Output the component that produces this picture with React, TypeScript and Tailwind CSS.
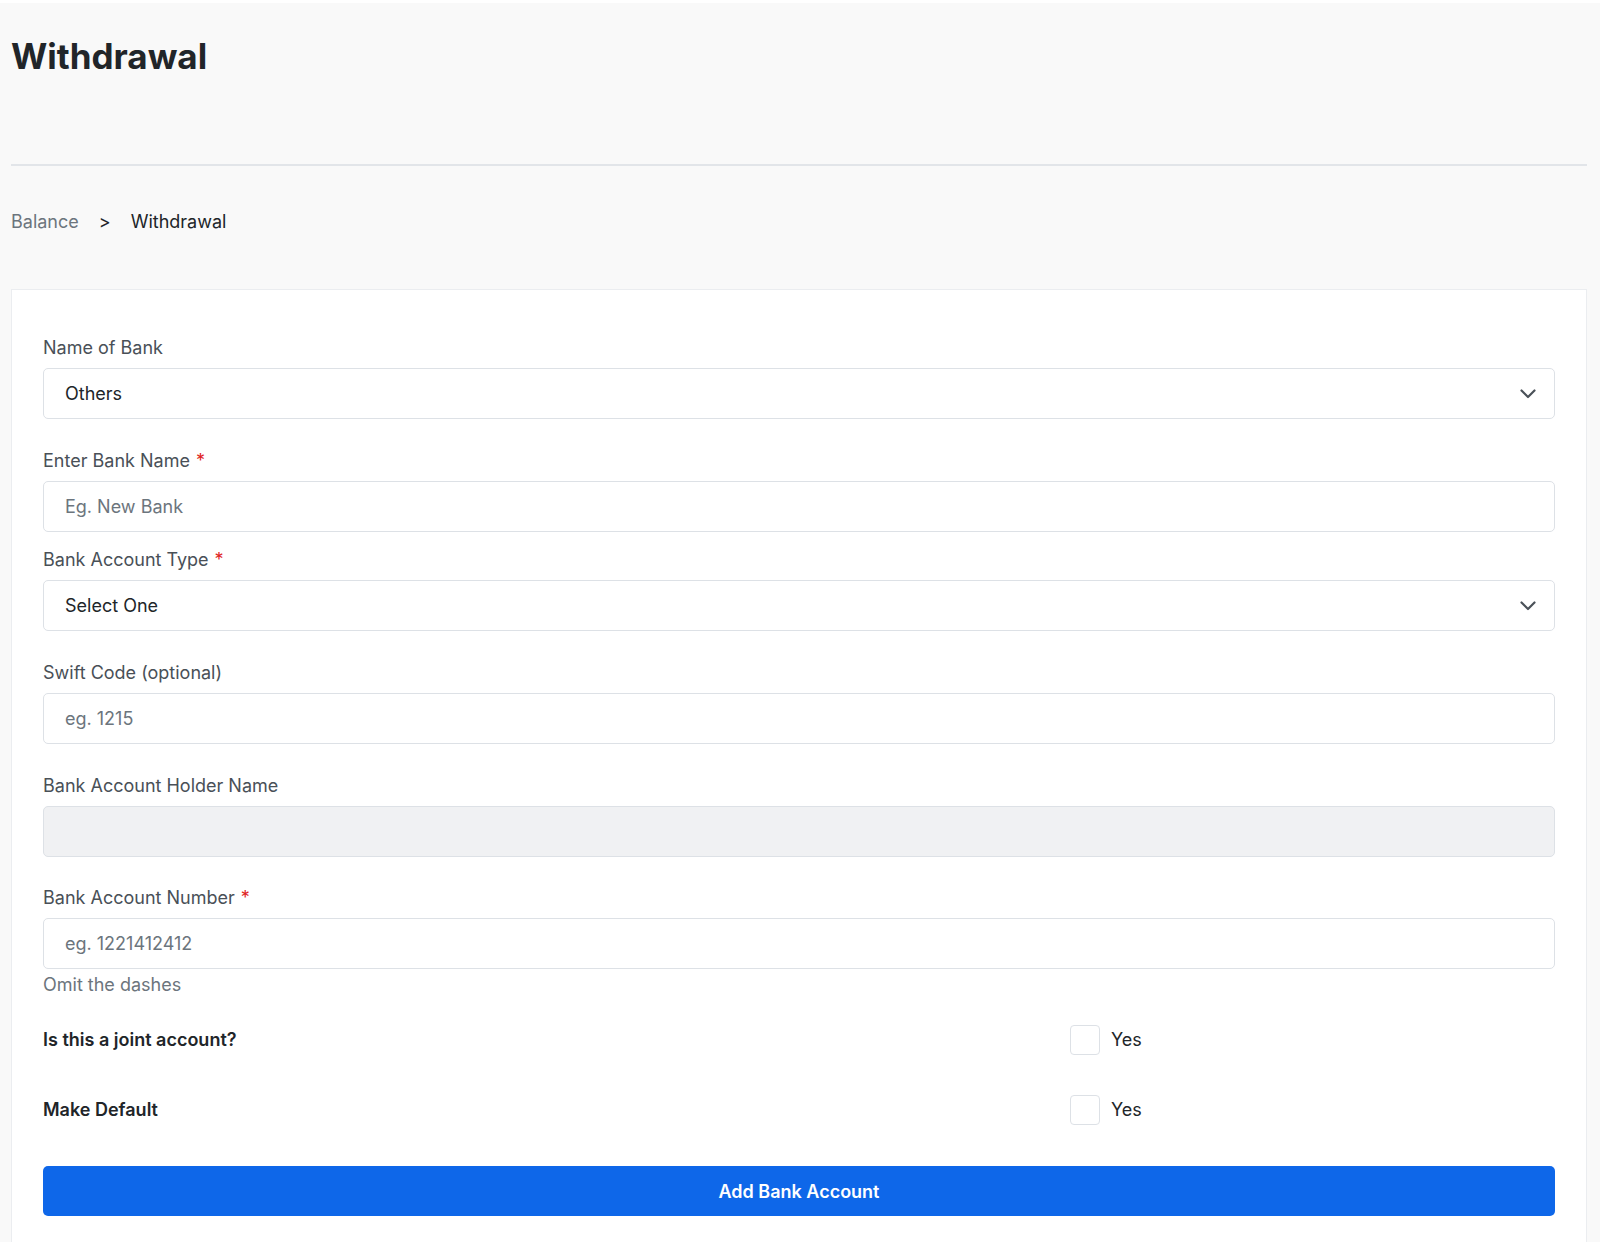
import React from "react";

function Chevron() {
  return (
    <svg width="16" height="10" viewBox="0 0 16 10" fill="none" className="shrink-0">
      <path d="M1.5 1.5L8 8L14.5 1.5" stroke="#4a5158" strokeWidth="2.2" strokeLinecap="round" strokeLinejoin="round" />
    </svg>
  );
}

function Label({ text, required }: { text: string; required?: boolean }) {
  return (
    <div className="h-6 mb-2 text-[18px] leading-6 text-[#495057]">
      {text}
      {required && <span className="text-[#e02424] ml-[6px]">*</span>}
    </div>
  );
}

function SelectBox({ value }: { value: string }) {
  return (
    <div className="h-[51px] rounded-[5px] border border-[#dde1e6] bg-white flex items-center justify-between pl-[21px] pr-[18px]">
      <span className="text-[18px] text-[#212529]">{value}</span>
      <Chevron />
    </div>
  );
}

function InputBox({ placeholder, disabled }: { placeholder?: string; disabled?: boolean }) {
  return (
    <div
      className={
        disabled
          ? "h-[51px] rounded-[5px] border border-[#dde1e6] bg-[#f0f1f3]"
          : "h-[51px] rounded-[5px] border border-[#dde1e6] bg-white flex items-center pl-[21px]"
      }
    >
      {placeholder && <span className="text-[18px] text-[#6c757d]">{placeholder}</span>}
    </div>
  );
}

function CheckRow({ label, className }: { label: string; className: string }) {
  return (
    <div className={"grid grid-cols-[1027px_1fr] items-center h-[31px] " + className}>
      <div className="text-[18px] font-semibold text-[#212529]">{label}</div>
      <div className="flex items-center gap-[11px]">
        <div className="w-[30px] h-[30px] rounded-[4px] border border-[#dde1e6] bg-white" />
        <span className="text-[18px] text-[#212529]">Yes</span>
      </div>
    </div>
  );
}

export default function App() {
  return (
    <div className="bg-white min-h-[1242px] pt-[3px] font-['Inter',sans-serif]">
      <div className="bg-[#f9f9f9] min-h-[1239px] pl-[11px] pr-[13px] pt-8 overflow-hidden">
        <h1 className="text-[35px] leading-[43px] font-bold text-[#212529]">Withdrawal</h1>
        <div className="mt-[86px] h-[2px] bg-[#e2e5e9]" />
        <div className="mt-[44px] h-6 flex items-center text-[18px] leading-6">
          <span className="text-[#6c757d]">Balance</span>
          <span className="text-[#212529] ml-[20px]">&gt;</span>
          <span className="text-[#212529] ml-[20px]">Withdrawal</span>
        </div>
        <div className="mt-[55px] bg-white border border-[#ebedf0] border-b-0 px-[31px] pt-[46px] pb-10">
          <div>
            <Label text="Name of Bank" />
            <SelectBox value="Others" />
          </div>
          <div className="mt-[30px]">
            <Label text="Enter Bank Name" required />
            <InputBox placeholder="Eg. New Bank" />
          </div>
          <div className="mt-[16px]">
            <Label text="Bank Account Type" required />
            <SelectBox value="Select One" />
          </div>
          <div className="mt-[30px]">
            <Label text="Swift Code (optional)" />
            <InputBox placeholder="eg. 1215" />
          </div>
          <div className="mt-[30px]">
            <Label text="Bank Account Holder Name" />
            <InputBox disabled />
          </div>
          <div className="mt-[29px]">
            <Label text="Bank Account Number" required />
            <InputBox placeholder="eg. 1221412412" />
            <div className="mt-1 text-[18px] leading-6 text-[#6c757d]">Omit the dashes</div>
          </div>
          <CheckRow label="Is this a joint account?" className="mt-[27px]" />
          <CheckRow label="Make Default" className="mt-[39px]" />
          <button className="mt-[41px] w-full h-[50px] rounded-[5px] bg-[#0e67e9] text-white text-[18px] font-semibold flex items-center justify-center">
            Add Bank Account
          </button>
        </div>
      </div>
    </div>
  );
}
